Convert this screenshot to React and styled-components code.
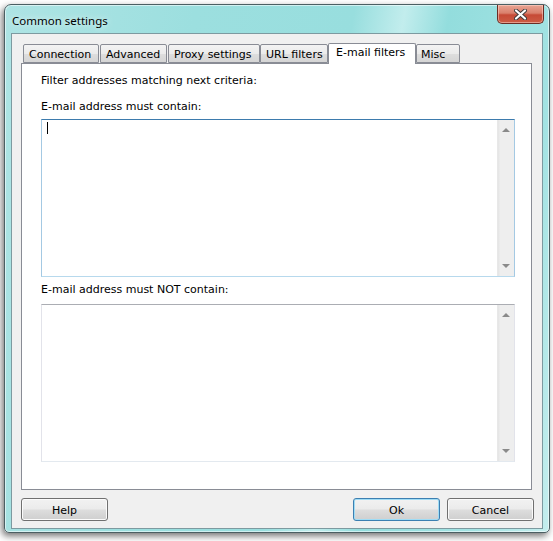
import React from 'react'
import styled, { createGlobalStyle } from 'styled-components'

const Global = createGlobalStyle`
  body {
    margin: 0;
    background: #ffffff;
    font-family: "DejaVu Sans", Verdana, sans-serif;
  }
`

const Page = styled.div`
  padding: 4px 0 0 4px;
  width: 553px;
  height: 541px;
  box-sizing: border-box;
`

const Window = styled.div`
  width: 546px;
  height: 529px;
  box-sizing: border-box;
  border: 1px solid #4b5f63;
  border-radius: 7px 7px 5px 5px;
  padding: 0 6px 3px 6px;
  display: flex;
  flex-direction: column;
  background: linear-gradient(100deg, #aee4e4 0%, #9cdfdf 30%, #98dede 55%, #c2eded 63%, #93dddd 70%, #a3e3e3 88%, #c4eeee 100%);
  box-shadow: -2px 3px 7px rgba(0, 0, 0, 0.55), inset 0 0 0 1px rgba(255, 255, 255, 0.55);
`

const TitleBar = styled.div`
  height: 28px;
  display: flex;
  justify-content: space-between;
  align-items: flex-start;
  flex-shrink: 0;
`

const Title = styled.div`
  font-family: "Noto Sans", sans-serif;
  font-size: 11.5px;
  color: #000;
  padding: 8px 0 0 1px;
  text-shadow: 0 0 6px rgba(255, 255, 255, 0.9);
`

const CloseButton = styled.div`
  width: 47px;
  height: 19px;
  margin-right: -1px;
  box-sizing: border-box;
  border: 1px solid #6b2c24;
  border-top: none;
  border-radius: 0 0 5px 5px;
  background: linear-gradient(#e9a493 0%, #d9806c 45%, #c64a36 55%, #cc5c44 100%);
  box-shadow: inset 0 0 0 1px rgba(255, 220, 210, 0.5);
  display: flex;
  align-items: center;
  justify-content: center;
`

const Client = styled.div`
  flex: 1;
  border: 1px solid #7d9aa0;
  background: #f0f0f0;
  padding: 9px 8px 7px 9px;
  display: flex;
  flex-direction: column;
`

const TabStrip = styled.div`
  display: flex;
  align-items: flex-end;
  height: 20px;
  padding-left: 2px;
  margin-right: 2px;
  position: relative;
  z-index: 1;
`

const Tab = styled.div`
  width: ${p => p.w}px;
  margin-right: ${p => p.gap}px;
  box-sizing: border-box;
  height: ${p => (p.active ? 21 : 19)}px;
  margin-bottom: ${p => (p.active ? -1 : 0)}px;
  border: 1px solid #898c95;
  border-bottom: ${p => (p.active ? 'none' : '1px solid #898c95')};
  border-radius: 2px 2px 0 0;
  background: ${p => (p.active ? '#ffffff' : 'linear-gradient(#f3f3f3 0%, #ebebeb 50%, #dedede 51%, #d5d5d5 100%)')};
  font-size: 11px;
  color: #000;
  line-height: ${p => (p.active ? 18 : 19)}px;
  padding-left: ${p => p.pad}px;
  white-space: nowrap;
`

const Panel = styled.div`
  height: 427px;
  box-sizing: border-box;
  margin-right: 2px;
  border: 1px solid #898c95;
  background: #ffffff;
  padding: 10px 16px 0 19px;
  display: flex;
  flex-direction: column;
`

const Label = styled.div`
  font-size: 11px;
  line-height: 13px;
  color: #000;
  margin-top: ${p => p.mt || 0}px;
  margin-bottom: ${p => p.mb || 0}px;
`

const TextBox = styled.div`
  height: 158px;
  box-sizing: border-box;
  border: 1px solid ${p => (p.focused ? '#a4c9e3' : '#e2e3ea')};
  border-top-color: ${p => (p.focused ? '#3d7bad' : '#abadb3')};
  border-bottom-color: ${p => (p.focused ? '#b7d9ed' : '#e3e9ef')};
  display: flex;
`

const TextArea = styled.div`
  flex: 1;
  padding: 2px 0 0 5px;
`

const Caret = styled.div`
  width: 1px;
  height: 12px;
  background: #000;
`

const ScrollBar = styled.div`
  width: 17px;
  display: flex;
  flex-direction: column;
  justify-content: space-between;
  align-items: center;
  background: linear-gradient(90deg, #e4e4e4 0%, #eeeeee 15%, #eeeeee 100%);
  border-left: 1px solid #e8e8e8;
  padding: 8px 0 8px 0;
  box-sizing: border-box;
`

const Arrow = styled.div`
  width: 0;
  height: 0;
  border-left: 4px solid transparent;
  border-right: 4px solid transparent;
  ${p => (p.down ? 'border-top: 4px solid #8a8a8a;' : 'border-bottom: 4px solid #8a8a8a;')}
`

const ButtonRow = styled.div`
  margin-top: 8px;
  display: flex;
  gap: 7px;
`

const Spacer = styled.div`
  flex: 1;
`

const Button = styled.div`
  width: 87px;
  height: 23px;
  box-sizing: border-box;
  border: 1px solid ${p => (p.focused ? '#3c7fb1' : '#707070')};
  border-radius: 3px;
  background: linear-gradient(#f2f2f2 0%, #ebebeb 48%, #dddddd 52%, #cfcfcf 100%);
  box-shadow: inset 0 0 0 1px ${p => (p.focused ? '#9fdcf5' : '#fbfbfb')};
  font-size: 11px;
  color: #000;
  padding-top: 1px;
  display: flex;
  align-items: center;
  justify-content: center;
`

const tabs = [
  { label: 'Connection', w: 76, gap: 1, pad: 5 },
  { label: 'Advanced', w: 67, gap: 1, pad: 5 },
  { label: 'Proxy settings', w: 92, gap: 0, pad: 5 },
  { label: 'URL filters', w: 68, gap: 0, pad: 5 },
  { label: 'E-mail filters', w: 88, gap: 0, pad: 7, active: true },
  { label: 'Misc', w: 44, gap: 0, pad: 4 },
]

const FilterBox = ({ focused }) => (
  <TextBox focused={focused}>
    <TextArea>{focused && <Caret />}</TextArea>
    <ScrollBar>
      <Arrow />
      <Arrow down />
    </ScrollBar>
  </TextBox>
)

export default function App() {
  return (
    <Page>
      <Global />
      <Window>
        <TitleBar>
          <Title>Common settings</Title>
          <CloseButton>
            <svg width="13" height="11" viewBox="0 0 13 11">
              <path d="M2 1.5 L11 9.5 M11 1.5 L2 9.5" stroke="#3a3a3a" strokeWidth="4" strokeLinecap="round" />
              <path d="M2 1.5 L11 9.5 M11 1.5 L2 9.5" stroke="#ffffff" strokeWidth="2.2" strokeLinecap="round" />
            </svg>
          </CloseButton>
        </TitleBar>
        <Client>
          <TabStrip>
            {tabs.map(t => (
              <Tab key={t.label} w={t.w} gap={t.gap} pad={t.pad} active={t.active}>{t.label}</Tab>
            ))}
          </TabStrip>
          <Panel>
            <Label>Filter addresses matching next criteria:</Label>
            <Label mt={13} mb={6}>E-mail address must contain:</Label>
            <FilterBox focused />
            <Label mt={6} mb={8}>E-mail address must NOT contain:</Label>
            <FilterBox />
          </Panel>
          <ButtonRow>
            <Button>Help</Button>
            <Spacer />
            <Button focused>Ok</Button>
            <Button>Cancel</Button>
          </ButtonRow>
        </Client>
      </Window>
    </Page>
  )
}
